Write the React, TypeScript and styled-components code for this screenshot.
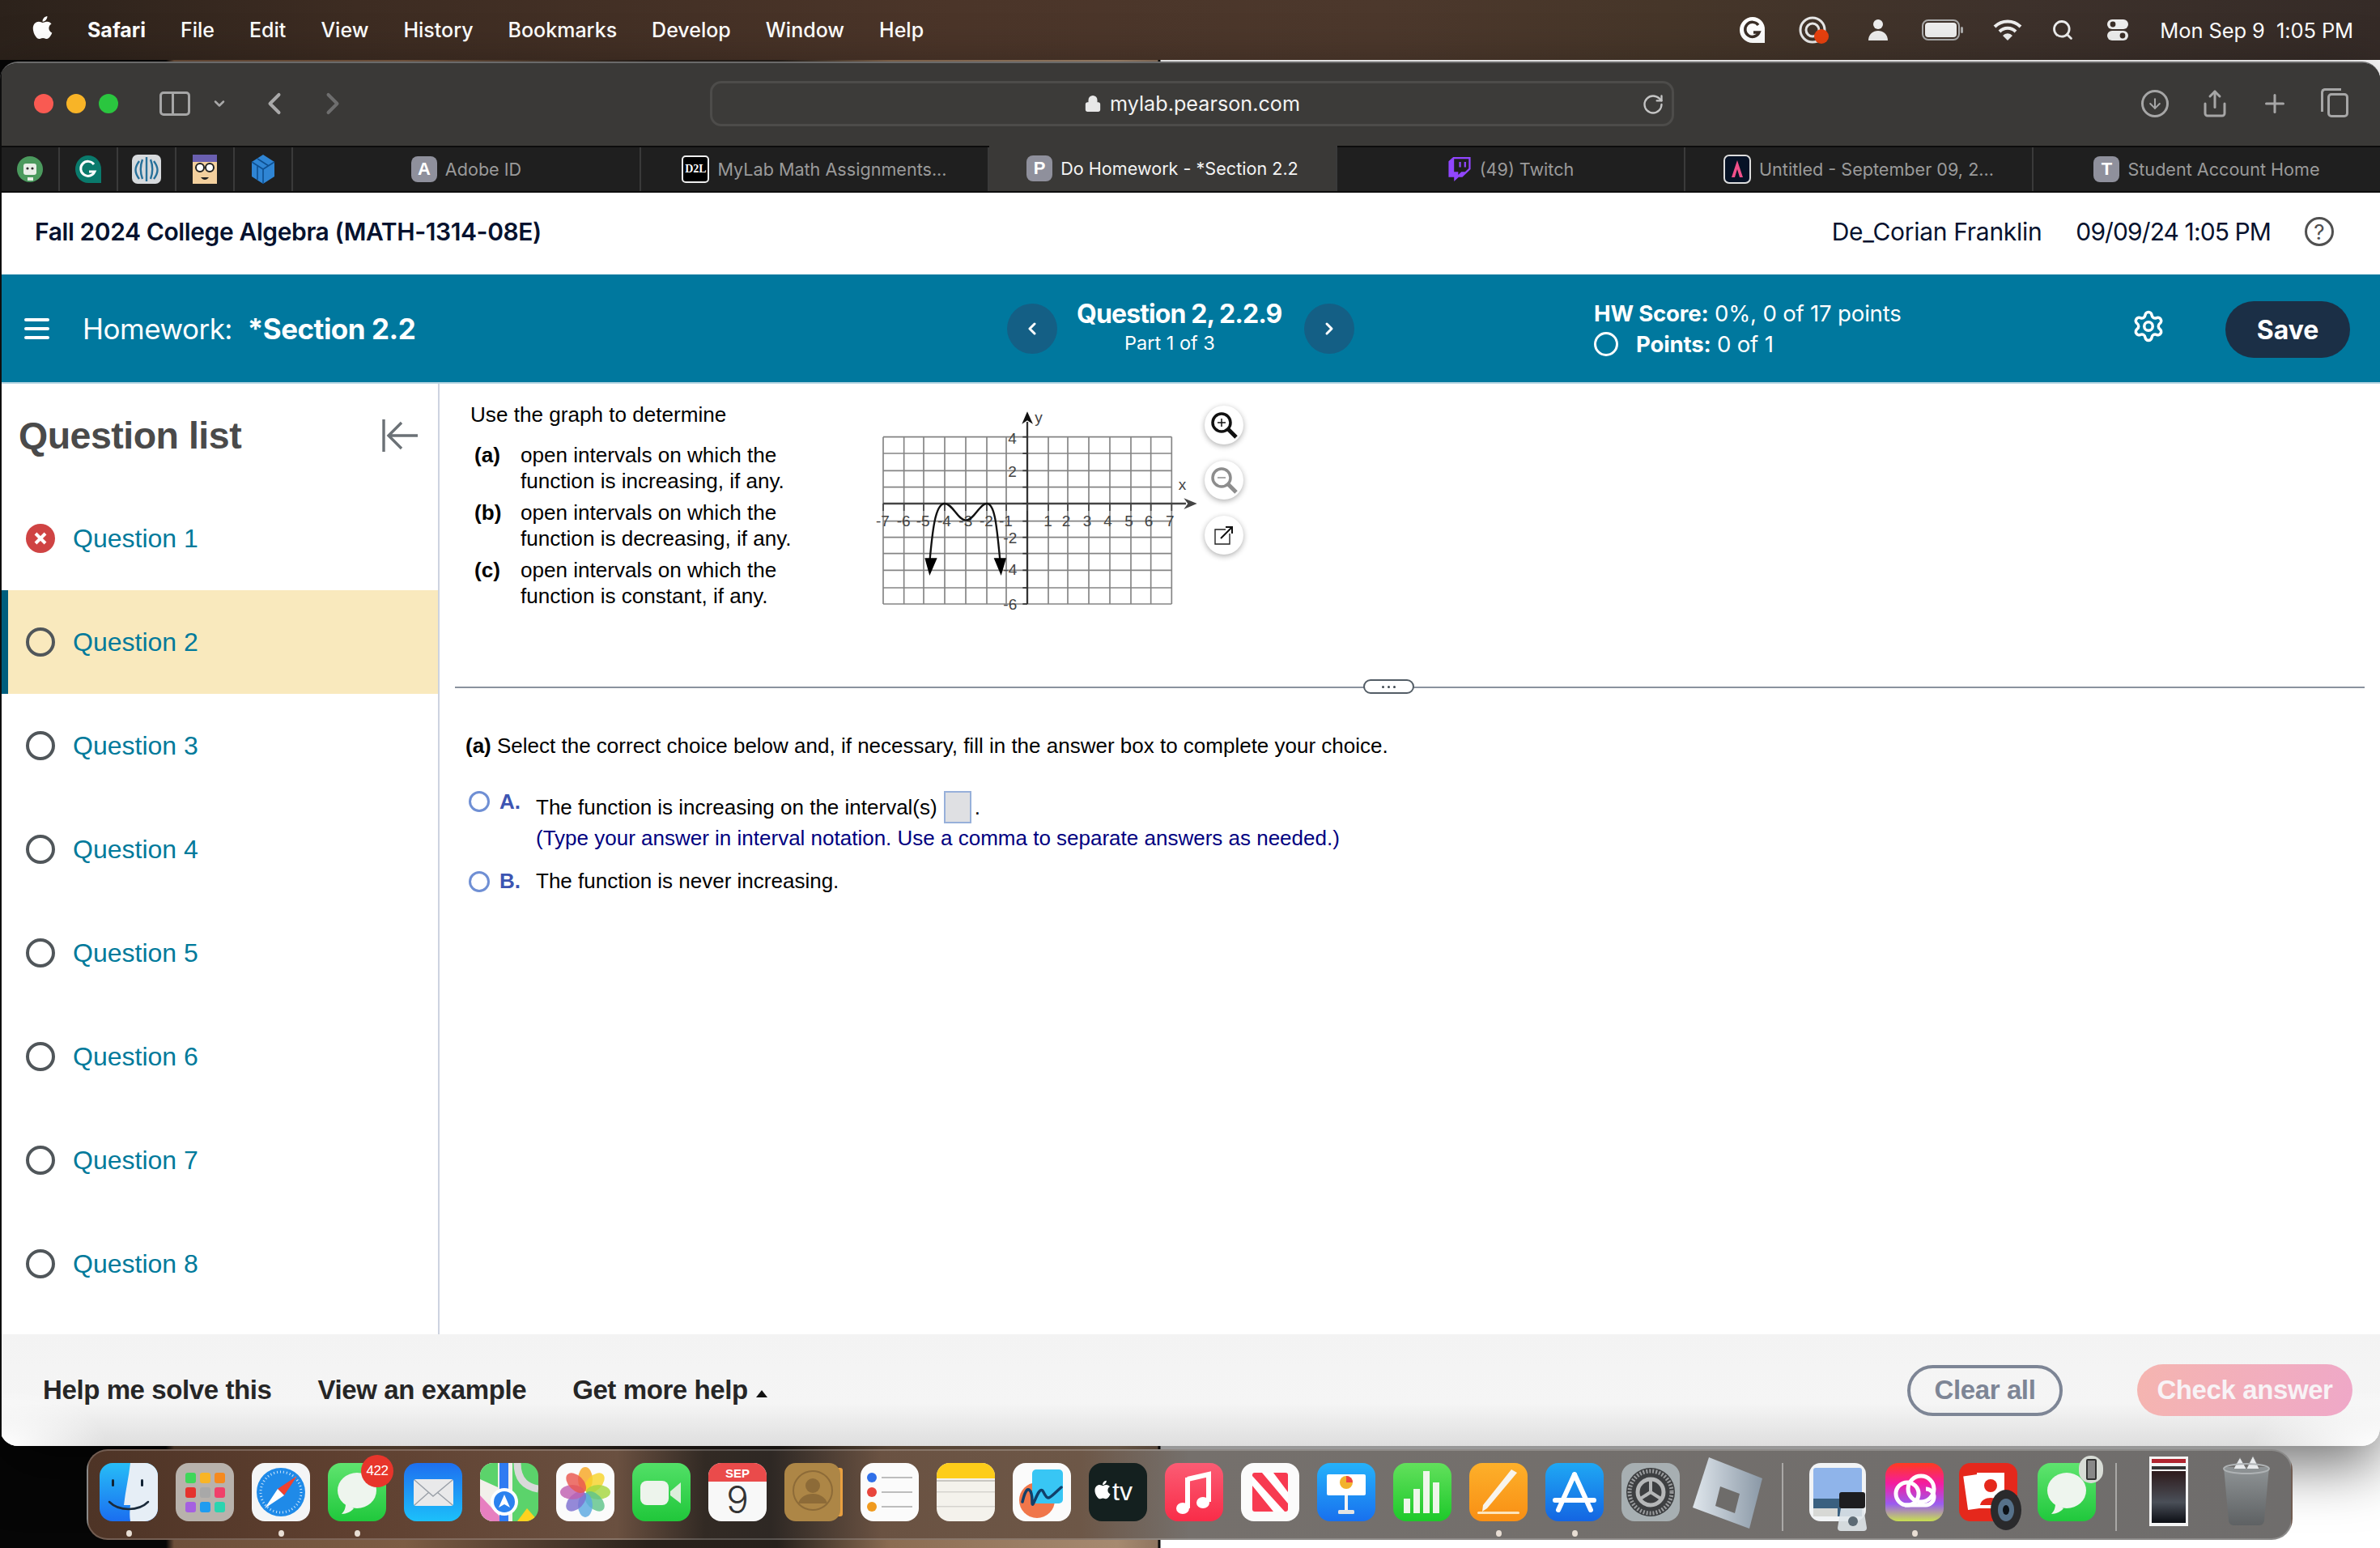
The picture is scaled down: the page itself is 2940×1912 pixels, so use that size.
import React from "react";
import styled, { createGlobalStyle } from "styled-components";
import { ChevronLeft, ChevronRight, Settings, Search, RotateCw, Plus, ChevronDown, Lock, ArrowDown, Share } from "lucide-react";
import { FaApple, FaTwitch } from "react-icons/fa";

const arial = '"Liberation Sans", Arial, sans-serif';
const inter = 'Inter, "Liberation Sans", sans-serif';

const Global = createGlobalStyle`
  html, body { margin: 0; padding: 0; background: #111; }
  * { box-sizing: border-box; }
`;

const Desktop = styled.div`
  width: 2940px; height: 1912px; overflow: hidden; display: flex; flex-direction: column;
  font-family: ${arial};
  background: linear-gradient(90deg, #060606 0 205px, #6d4f3a 215px, #7c5c44 500px, #2a211b 800px, #26201b 960px, #8b6c52 1100px, #a68a70 1380px, #8f7560 1430px, #0c0c0c 1431px 1433px, #ffffff 1434px);
`;
const MenuBar = styled.div`
  height: 74px; flex: none; display: flex; align-items: center; padding: 0 33px 0 40px; color: #fff;
  font: 500 25px ${inter};
  background: linear-gradient(90deg, #2c221b 0, #3d2c22 15%, #4b3529 40%, #4c382c 58%, #463629 70%, #3d312b 85%, #352b27 100%);
`;
const MenuLeft = styled.div`display: flex; align-items: center; gap: 43px; flex: 1;`;
const AppleSlot = styled.div`width: 25px; display: flex; margin-top: -6px;`;
const MenuStrong = styled.span`font-weight: 700;`;
const MenuItem = styled.span``;
const MenuRight = styled.div`display: flex; align-items: center;`;
const StatusSlot = styled.div<{ $w: number }>`width: ${p => p.$w}px; display: flex; justify-content: center; align-items: center;`;
const Clock = styled.span`margin-left: 13px; white-space: pre; font-weight: 400; font-size: 25.5px; letter-spacing: -.1px;`;

const Win = styled.div`
  margin-top: 2px; height: 1710px; flex: none; background: #0e0e0e; padding: 0 0 0 2px; display: flex; flex-direction: column;
  border-radius: 22px; overflow: hidden; box-shadow: 0 24px 70px rgba(0,0,0,.55); position: relative;
  border-top: 2px solid #6a6a6a;
`;
const Toolbar = styled.div`
  height: 102px; flex: none; background: #3a3937; position: relative; display: flex; align-items: center; padding: 0 37px 2px 40px; color: #a9a9a9;
`;
const Lights = styled.div`display: flex; gap: 16px; margin-right: 51px;`;
const Light = styled.span<{ $c: string }>`width: 24px; height: 24px; border-radius: 50%; background: ${p => p.$c};`;
const SidebarGlyph = styled.div`
  width: 38px; height: 30px; border: 3px solid #a6a6a6; border-radius: 5px; position: relative; margin-right: 16px;
  &::before { content: ""; position: absolute; left: 12px; top: 0; bottom: 0; width: 3px; background: #a6a6a6; }
`;
const NavGroup = styled.div`display: flex; align-items: center;`;
const NavGap = styled.div<{ $w: number }>`width: ${p => p.$w}px;`;
const UrlBar = styled.div`
  position: absolute; left: 875px; top: 22px; width: 1191px; height: 56px; border-radius: 14px; border: 3px solid #4d4c4a; background: #3c3b39;
  display: flex; align-items: center; justify-content: center; gap: 10px; color: #f2f2f2; font: 400 25.2px ${inter};
`;
const Reload = styled.div`position: absolute; right: 9px; top: 12px; display: flex; color: #c4c4c4;`;
const ToolRight = styled.div`margin-left: auto; display: flex; align-items: center; gap: 36px; color: #a6a6a6;`;
const ToolSlot = styled.div`width: 38px; display: flex; justify-content: center; align-items: center; position: relative;`;
const RoundDown = styled.div`width: 34px; height: 34px; border-radius: 50%; border: 3px solid #a6a6a6; display: flex; align-items: center; justify-content: center;`;
const TabsCopy = styled.div`
  width: 26px; height: 30px; position: relative; border: 3px solid #a6a6a6; border-radius: 5px; margin: 4px 0 0 8px;
  &::before { content: ""; position: absolute; left: -11px; top: -9px; width: 22px; height: 26px; border: 3px solid #a6a6a6; border-right: 0; border-bottom: 0; border-radius: 5px 0 0 0; }
`;

const Tabs = styled.div`
  height: 58px; flex: none; background: #1f1f1f; display: flex; border-top: 2px solid #0c0c0c; border-bottom: 2px solid #0c0c0c; color: #9a9a9a; font: 400 21.6px ${inter};
`;
const Pinned = styled.div`width: 72px; flex: none; border-right: 2px solid #3a3a3a; display: flex; align-items: center; justify-content: center;`;
const Tab = styled.div<{ $active?: boolean }>`
  width: 430px; flex: none; display: flex; align-items: center; justify-content: center; gap: 10px; white-space: nowrap; border-right: 2px solid #3a3a3a;
  background: ${p => (p.$active ? "#3a3937" : "transparent")}; color: ${p => (p.$active ? "#f4f4f4" : "#9a9a9a")};
  margin-top: ${p => (p.$active ? "-2px" : "0")};
`;
const TabLetter = styled.span`width: 32px; height: 32px; border-radius: 8px; background: #8f909c; color: #fff; display: flex; align-items: center; justify-content: center; font: 700 22px ${arial};`;
const D2L = styled.span`width: 34px; height: 34px; border-radius: 5px; background: #000; border: 2px solid #eee; color: #fff; display: flex; align-items: center; justify-content: center; font: 700 14px "Liberation Serif", serif;`;

const Page = styled.div`flex: 1; background: #fff; display: flex; flex-direction: column; min-height: 0;`;
const TopHead = styled.div`
  height: 101px; flex: none; display: flex; align-items: center; padding: 0 57px 5px 41px; color: #06122e; font: 400 30px ${inter};
`;
const Course = styled.div`font-weight: 600; flex: 1; letter-spacing: -.4px;`;
const Person = styled.span`margin-right: 42px; letter-spacing: -.3px;`;
const Stamp = styled.span`margin-right: 42px; letter-spacing: -.9px;`;
const HelpRing = styled.div`width: 36px; height: 36px; border-radius: 50%; border: 3px solid #505050; color: #505050; display: flex; align-items: center; justify-content: center; font: 400 26px ${inter};`;

const Band = styled.div`
  height: 135px; flex: none; background: #00789e; border-bottom: 2px solid #b6d5e2; color: #fff; display: flex; align-items: center; position: relative; padding-left: 28px; font-family: ${inter};
`;
const Burger = styled.div`width: 31px; display: flex; flex-direction: column; gap: 7px; margin-right: 41px; span { height: 4px; background: #fff; border-radius: 2px; }`;
const HwTitle = styled.div`font-size: 35px; width: 1142px; white-space: pre; letter-spacing: -.5px; b { font-weight: 700; }`;
const RoundNav = styled.div`width: 62px; height: 62px; border-radius: 50%; background: #145f85; display: flex; align-items: center; justify-content: center; flex: none;`;
const QBlock = styled.div`width: 255px; margin: -4px 26px 0 24px; display: flex; flex-direction: column; align-items: flex-start;`;
const QTitle = styled.div`font-weight: 700; font-size: 32px; line-height: 40px; white-space: nowrap; letter-spacing: -.9px;`;
const QPart = styled.div`font-size: 23.5px; line-height: 32px; margin-left: 59px; white-space: nowrap;`;
const Score = styled.div`margin-left: 296px; width: 600px; font-size: 27.6px; line-height: 38px; letter-spacing: -.2px; b { font-weight: 700; }`;
const ScoreRow = styled.div`display: flex; align-items: center; gap: 22px;`;
const ScoreRing = styled.span`width: 30px; height: 30px; border-radius: 50%; border: 3px solid #fff;`;
const SaveBtn = styled.div`
  position: absolute; right: 37px; top: 33px; width: 154px; height: 70px; border-radius: 35px; background: #1b2f46; color: #fff; font: 700 32px ${inter};
  display: flex; align-items: center; justify-content: center;
`;
const GearSlot = styled.div`position: absolute; left: 2631px; top: 43px; display: flex;`;

const Main = styled.div`flex: 1; display: flex; min-height: 0;`;
const Side = styled.div`width: 541px; flex: none; border-right: 2px solid #cdd3e0; display: flex; flex-direction: column;`;
const SideHead = styled.div`height: 127px; flex: none; display: flex; align-items: center; justify-content: space-between; padding: 0 23px 0 21px;`;
const SideTitle = styled.div`font: 700 46.5px ${arial}; color: #4a4a4a; letter-spacing: -.5px;`;
const Row = styled.div<{ $active?: boolean }>`
  height: 128px; flex: none; display: flex; align-items: center; gap: 22px; padding-left: ${p => (p.$active ? "22px" : "30px")};
  background: ${p => (p.$active ? "#f9e9bd" : "transparent")}; border-left: ${p => (p.$active ? "8px solid #005e7d" : "0")};
  color: #007a9b; font: 400 32px ${arial};
`;
const RowRing = styled.span`width: 36px; height: 36px; border-radius: 50%; border: 4px solid #50565a; flex: none;`;
const RowBad = styled.span`width: 36px; height: 36px; border-radius: 50%; background: #cf4343; flex: none; display: flex; align-items: center; justify-content: center;`;

const Content = styled.div`flex: 1; display: flex; flex-direction: column; min-width: 0; color: #000; font: 400 26px ${arial};`;
const QArea = styled.div`height: 374px; flex: none; display: flex; padding: 17px 0 0 38px;`;
const Prompt = styled.div`width: 479px; flex: none; padding-top: 5px; line-height: 32px; font-size: 26.1px;`;
const PromptPart = styled.div`display: flex; margin-top: 7px; b { width: 62px; flex: none; padding-left: 5px; }`;
const FirstPart = styled(PromptPart)`margin-top: 18px;`;
const Tools = styled.div`display: flex; flex-direction: column; gap: 20px; margin: 10px 0 0 8px;`;
const ToolBtn = styled.div`width: 48px; height: 48px; border-radius: 50%; background: #fff; box-shadow: 0 2px 7px rgba(0,0,0,.32); display: flex; align-items: center; justify-content: center;`;
const Divider = styled.div`height: 2px; flex: none; margin: 0 19px 0 19px; background: #8a929e; position: relative;`;
const Handle = styled.div`
  position: absolute; left: 1122px; top: -9px; width: 63px; height: 18px; background: #fff; border: 2px solid #535d66; border-radius: 9px;
  display: flex; align-items: center; justify-content: center; gap: 4px; span { width: 3px; height: 3px; background: #3f4850; border-radius: 50%; }
`;
const Answer = styled.div`padding: 53px 0 0 32px;`;
const Lead = styled.div`line-height: 36px; b { font-weight: 700; }`;
const Choice = styled.div`display: flex; padding-left: 4px;`;
const ChoiceA = styled(Choice)`margin-top: 36px;`;
const ChoiceB = styled(Choice)`margin-top: 17px; align-items: center;`;
const Radio = styled.span`width: 26px; height: 26px; border-radius: 50%; border: 3px solid #6f8fd4; flex: none; margin-right: 12px; margin-top: 2px;`;
const Letter = styled.b`width: 45px; flex: none; color: #3d55b2; font-size: 26px; line-height: 30px;`;
const ChoiceText = styled.div`line-height: 36px;`;
const FirstLine = styled.div`display: flex; align-items: center; height: 40px; margin-top: 2px;`;
const Blank = styled.span`width: 34px; height: 40px; background: #dfe0e3; border: 2px solid #97b0da; margin: 0 4px 0 8px;`;
const Hint = styled.div`color: #000080;`;

const Foot = styled.div`
  height: 138px; flex: none; display: flex; align-items: center; padding: 0 34px 0 51px; color: #262626; font: 700 33px ${arial}; letter-spacing: -.4px;
  background: radial-gradient(ellipse 130px 70px at 0 100%, #fff, transparent), radial-gradient(ellipse 160px 70px at 100% 100%, #fff, transparent), linear-gradient(#f3f3f3, #f5f5f5 62%, #dedede);
`;
const FootLink = styled.span`margin-right: 57px;`;
const Caret = styled.span`display: inline-block; width: 0; height: 0; border: 7.5px solid transparent; border-top: 0; border-bottom: 9px solid #111; margin-left: 10px; vertical-align: 2px;`;
const Clear = styled.div`
  margin-left: auto; width: 192px; height: 63px; border-radius: 32px; border: 4px solid #7d8595; color: #7d8595; display: flex; align-items: center; justify-content: center; margin-right: 92px;
`;
const Check = styled.div`
  width: 266px; height: 64px; border-radius: 32px; color: #f8f3f6; display: flex; align-items: center; justify-content: center;
  background: linear-gradient(100deg, #f5b5b0, #efa8c8);
`;

const Dock = styled.div`
  margin: 4px 0 0 107px; width: 2725px; height: 112px; flex: none; border-radius: 26px; border: 2px solid rgba(255,255,255,.2); display: flex; padding: 15px 0 0 14px; position: relative;
  background: linear-gradient(90deg, #4e3426 0, #5f4030 12%, #6a5040 24%, #322a24 28%, #2e2824 31%, #6a5242 36%, #6d5747 45%, #75706c 50%, #6f6d6c 100%);
`;
const DockSlot = styled.div<{ $w?: number; $ml?: number }>`
  width: ${p => p.$w ?? 72}px; margin-left: ${p => p.$ml ?? 22}px; flex: none; display: flex; flex-direction: column; align-items: center; position: relative;
`;
const FirstSlot = styled(DockSlot)`margin-left: 0;`;
const Glyph = styled.div<{ $top?: number }>`height: 72px; display: flex; justify-content: center; margin-top: ${p => p.$top ?? 0}px; svg { flex: none; }`;
const Dot = styled.span<{ $on?: boolean }>`width: 7px; height: 8px; border-radius: 50%; margin-top: 11px; background: ${p => (p.$on ? "#e8ded4" : "transparent")};`;
const Badge = styled.span`position: absolute; top: -10px; right: -9px; width: 40px; height: 40px; border-radius: 50%; background: #e8352b; color: #fff; font: 400 17px ${arial}; display: flex; align-items: center; justify-content: center; letter-spacing: -.5px;`;
const PhoneBadge = styled.span`
  position: absolute; top: -9px; right: -9px; width: 30px; height: 34px; border-radius: 15px; background: #d8dcd6; display: flex; align-items: center; justify-content: center;
  &::before { content: ""; width: 9px; height: 22px; border: 2px solid #333; background: #888; border-radius: 2px; }
`;
const DockRule = styled.div`width: 2px; height: 84px; background: rgba(255,255,255,.4); margin: 0 0 0 24px; flex: none;`;

const Tile = ({ children, w = 72, h = 72 }: { children: React.ReactNode; w?: number; h?: number }) => (
  <svg width={w} height={h} viewBox={`0 0 ${w} ${h}`}>{children}</svg>
);
const Grad = ({ id, a, b, x = false }: { id: string; a: string; b: string; x?: boolean }) => (
  <defs><linearGradient id={id} x1="0" y1="0" x2={x ? 1 : 0} y2={x ? 0 : 1}><stop offset="0" stopColor={a} /><stop offset="1" stopColor={b} /></linearGradient></defs>
);

const Finder = () => (
  <Tile>
    <Grad id="fa" a="#27bdf7" b="#1a6ef0" />
    <rect width="72" height="72" rx="16" fill="url(#fa)" />
    <path d="M38 0h18a16 16 0 0 1 16 16v40a16 16 0 0 1-16 16H38c-1-6-1-12 0-20h-8c2-18 6-34 8-52z" fill="#e6eef6" />
    <rect x="15" y="20" width="3" height="9" rx="1.5" fill="#123" /><rect x="51" y="20" width="3" height="9" rx="1.5" fill="#123" />
    <path d="M12 48c12 12 36 12 48 0" fill="none" stroke="#1a2a3a" strokeWidth="2.5" strokeLinecap="round" />
  </Tile>
);
const Launchpad = () => {
  const c = ["#3fd75a", "#f9b526", "#f58a1f", "#e5322d", "#a8a8a8", "#f0406a", "#a560e0", "#1f9cf0", "#2bd4b0"];
  return (
    <Tile>
      <rect width="72" height="72" rx="16" fill="#b8b2ac" />
      {c.map((f, i) => <rect key={f} x={12 + (i % 3) * 18} y={12 + Math.floor(i / 3) * 18} width="13" height="13" rx="3" fill={f} />)}
    </Tile>
  );
};
const Safari = () => (
  <Tile>
    <rect width="72" height="72" rx="16" fill="#f4f5f6" />
    <circle cx="36" cy="36" r="30" fill="#1f8ae8" /><circle cx="36" cy="36" r="25" fill="none" stroke="#cfe6fa" strokeWidth="3" strokeDasharray="1 3" />
    <path d="M56 16L40 40 32 32z" fill="#f0412f" /><path d="M16 56L32 32l8 8z" fill="#fff" />
  </Tile>
);
const Messages = ({ id }: { id: string }) => (
  <Tile>
    <Grad id={id} a="#5fe46f" b="#20c83c" />
    <rect width="72" height="72" rx="16" fill={`url(#${id})`} />
    <ellipse cx="36" cy="34" rx="24" ry="22" fill="#eef5ee" /><path d="M22 50c0 6-2 10-5 13 6 0 12-3 15-7z" fill="#eef5ee" />
  </Tile>
);
const Mail = () => (
  <Tile>
    <Grad id="ma" a="#1e6ff0" b="#1cc0fa" />
    <rect width="72" height="72" rx="16" fill="url(#ma)" />
    <rect x="12" y="20" width="49" height="33" rx="3" fill="#e9e9ea" /><path d="M13 21l23 20 24-20M13 52l18-16M60 52L41 36" fill="none" stroke="#9aa0a8" strokeWidth="1.4" />
  </Tile>
);
const Maps = () => (
  <Tile>
    <defs><clipPath id="mpc"><rect width="72" height="72" rx="16" /></clipPath></defs>
    <g clipPath="url(#mpc)">
      <rect width="72" height="72" fill="#5bd36b" /><path d="M0 0h40v72H0z" fill="#f2f0ea" /><path d="M0 0h22v30L0 20z" fill="#5bd36b" /><path d="M0 40l30 32H0z" fill="#e77fc0" /><path d="M46 72l12-16 14 16z" fill="#ffd21f" />
      <rect x="24" y="0" width="11" height="72" fill="#2f7bf2" /><path d="M46 0c0 24 14 30 26 32" fill="none" stroke="#d9d9d9" strokeWidth="9" />
      <circle cx="30" cy="48" r="17" fill="#fff" /><circle cx="30" cy="48" r="13" fill="#2b82ef" /><path d="M30 39l7 16-7-4-7 4z" fill="#fff" />
    </g>
  </Tile>
);
const Photos = () => {
  const c = ["#f6a623", "#f7d32a", "#a5d63f", "#5fc38a", "#5ba8e0", "#7d6fd0", "#c05fb0", "#e9574e"];
  return (
    <Tile>
      <rect width="72" height="72" rx="16" fill="#fbfbfb" />
      {c.map((f, i) => <ellipse key={f} cx="36" cy="20" rx="9" ry="15" fill={f} opacity=".82" transform={`rotate(${i * 45} 36 36)`} />)}
    </Tile>
  );
};
const Facetime = () => (
  <Tile>
    <Grad id="ft" a="#52e067" b="#20c73a" />
    <rect width="72" height="72" rx="16" fill="url(#ft)" />
    <rect x="10" y="22" width="35" height="30" rx="8" fill="#edf4ec" /><path d="M47 35l13-11v26L47 40z" fill="#dbeedb" />
  </Tile>
);
const IconText = styled.text`font-family: ${arial};`;
const ThinText = styled.text`font-family: ${inter}; font-weight: 300;`;
const Calendar = () => (
  <Tile>
    <defs><clipPath id="cal"><rect width="72" height="72" rx="16" /></clipPath></defs>
    <g clipPath="url(#cal)"><rect width="72" height="72" fill="#f8f8f8" /><rect width="72" height="23" fill="#ea4b4b" /></g>
    <IconText x="36" y="18" fontSize="15" fontWeight="700" fill="#fff" textAnchor="middle">SEP</IconText>
    <ThinText x="36" y="62" fontSize="46" fill="#333" textAnchor="middle">9</ThinText>
  </Tile>
);
const Contacts = () => (
  <Tile>
    <rect x="60" y="6" width="12" height="60" rx="3" fill="#e9a040" />
    <rect width="69" height="72" rx="14" fill="#ad8646" />
    <circle cx="35" cy="34" r="24" fill="none" stroke="#8d6b38" strokeWidth="2" />
    <circle cx="35" cy="28" r="9" fill="#8d6b38" /><path d="M17 50c4-16 32-16 36 0" fill="#8d6b38" />
  </Tile>
);
const Reminders = () => (
  <Tile>
    <rect width="72" height="72" rx="16" fill="#fbfbfb" />
    {[["#2f6fe8", 18], ["#e8453c", 36], ["#f09a1e", 54]].map(([f, y]) => (
      <g key={String(y)}><circle cx="14" cy={y as number} r="6" fill={f as string} /><rect x="26" y={(y as number) - 1} width="38" height="2" fill="#bdbdbd" /></g>
    ))}
  </Tile>
);
const Notes = () => (
  <Tile>
    <defs><clipPath id="nt"><rect width="72" height="72" rx="16" /></clipPath></defs>
    <g clipPath="url(#nt)"><rect width="72" height="72" fill="#f4f2ec" /><rect width="72" height="19" fill="#fdcd1a" />
      <rect y="21" width="72" height="2" fill="#c9c7c2" /><rect y="35" width="72" height="1.5" fill="#d5d3ce" /><rect y="53" width="72" height="1.5" fill="#d5d3ce" /></g>
  </Tile>
);
const Freeform = () => (
  <Tile>
    <rect width="72" height="72" rx="16" fill="#fbfbfb" />
    <circle cx="30" cy="46" r="22" fill="#f0764a" /><rect x="24" y="8" width="38" height="42" rx="5" fill="#38c6f4" />
    <path d="M12 48c6-26 12-14 12 0s8-24 14-12 6 8 22-6" fill="none" stroke="#11406a" strokeWidth="3.5" strokeLinecap="round" />
  </Tile>
);
const TvApp = () => (
  <Tile>
    <rect width="72" height="72" rx="16" fill="#14201f" />
    <foreignObject x="4" y="20" width="26" height="30"><FaApple size={26} color="#fff" /></foreignObject>
    <IconText x="29" y="46" fontSize="32" fill="#fff">tv</IconText>
  </Tile>
);
const Music = () => (
  <Tile>
    <Grad id="mu" a="#fb5c74" b="#f92c48" />
    <rect width="72" height="72" rx="16" fill="url(#mu)" />
    <path d="M28 20l26-6v34" fill="none" stroke="#fff" strokeWidth="6" /><path d="M28 18v38" stroke="#fff" strokeWidth="6" />
    <ellipse cx="22" cy="56" rx="8" ry="7" fill="#fff" /><ellipse cx="47" cy="49" rx="8" ry="7" fill="#fff" />
  </Tile>
);
const News = () => (
  <Tile>
    <rect width="72" height="72" rx="16" fill="#fbfbfb" />
    <rect x="14" y="12" width="44" height="48" rx="3" fill="#f73a50" /><path d="M14 16l40 44h-14L14 28z" fill="#fff" />
    <path d="M26 12h14l18 24v14z" fill="#fff" />
  </Tile>
);
const Keynote = () => (
  <Tile>
    <Grad id="kn" a="#25b2fb" b="#1870ee" />
    <rect width="72" height="72" rx="16" fill="url(#kn)" />
    <rect x="12" y="14" width="48" height="26" rx="2" fill="#fff" /><circle cx="36" cy="24" r="8" fill="#f2b22c" /><path d="M36 16a8 8 0 0 1 8 8h-8z" fill="#e44" />
    <rect x="34" y="40" width="4" height="20" fill="#f4f4f4" /><rect x="26" y="58" width="20" height="5" rx="1.5" fill="#e3e3e3" />
  </Tile>
);
const Numbers = () => (
  <Tile>
    <Grad id="nu" a="#62e05c" b="#1dc92a" />
    <rect width="72" height="72" rx="16" fill="url(#nu)" />
    <rect x="13" y="44" width="8" height="18" fill="#eef6ea" /><rect x="25" y="32" width="8" height="30" fill="#eef6ea" /><rect x="37" y="10" width="8" height="52" fill="#eef6ea" /><rect x="49" y="24" width="8" height="38" fill="#eef6ea" />
  </Tile>
);
const Pages = () => (
  <Tile>
    <Grad id="pg" a="#fdb02a" b="#f98f14" />
    <rect width="72" height="72" rx="16" fill="url(#pg)" />
    <path d="M52 8l7 4-37 44-6 4 1-8z" fill="#f8f4ec" /><rect x="10" y="60" width="52" height="3" rx="1.5" fill="#fde5bb" />
  </Tile>
);
const AppStore = () => (
  <Tile>
    <Grad id="as" a="#1fa8f4" b="#1465e2" />
    <rect width="72" height="72" rx="16" fill="url(#as)" />
    <path d="M36 14L16 58M36 14l20 44M12 46h48" stroke="#fff" strokeWidth="6" strokeLinecap="round" fill="none" />
  </Tile>
);
const SystemPrefs = () => (
  <Tile>
    <rect width="72" height="72" rx="16" fill="#a7afb2" />
    <circle cx="36" cy="36" r="30" fill="#3d3f41" /><circle cx="36" cy="36" r="26" fill="none" stroke="#9a9c9e" strokeWidth="5" strokeDasharray="2 2" />
    <circle cx="36" cy="36" r="16" fill="none" stroke="#b5b7b8" strokeWidth="5" />
    <path d="M36 36V20M36 36L22 45M36 36l14 9" stroke="#b5b7b8" strokeWidth="4" />
  </Tile>
);
const Roblox = () => (
  <Tile w={86} h={88}>
    <Grad id="rb" a="#dfe6ec" b="#8a98a6" x />
    <path d="M20 0l66 26-16 62L0 62z" fill="url(#rb)" /><path d="M34 36l24 9-6 24-24-9z" fill="#6e6c6a" />
  </Tile>
);
const Preview = () => (
  <Tile h={84} w={74}>
    <rect x="1" width="70" height="72" rx="14" fill="#f1f3f5" /><rect x="6" y="6" width="60" height="60" rx="3" fill="#8fb4ea" /><path d="M6 44h60v22H6z" fill="#3a6080" /><path d="M6 56h30v10H6z" fill="#d7d8d5" />
    <rect x="38" y="36" width="32" height="20" rx="3" fill="#1d1d1f" /><path d="M40 56h28l4 24a4 4 0 0 1-4 4H40a4 4 0 0 1-4-4z" fill="#dfe6ea" opacity=".9" /><circle cx="55" cy="72" r="6" fill="#5c6a74" />
  </Tile>
);
const CreativeCloud = () => (
  <Tile>
    <defs><linearGradient id="ccg" x1="0" y1="0" x2="0" y2="1"><stop offset="0" stopColor="#ff3b1f" /><stop offset=".35" stopColor="#f41ca0" /><stop offset=".7" stopColor="#9a5cf0" /><stop offset="1" stopColor="#c8e050" /></linearGradient></defs>
    <rect width="72" height="72" rx="16" fill="url(#ccg)" />
    <circle cx="27" cy="38" r="14" fill="none" stroke="#fff" strokeWidth="5" /><circle cx="44" cy="32" r="16" fill="none" stroke="#fff" strokeWidth="5" /><path d="M24 52h26a10 10 0 0 0 0-20" fill="none" stroke="#fff" strokeWidth="5" />
  </Tile>
);
const PhotoBooth = () => (
  <Tile h={84} w={78}>
    <rect width="72" height="72" rx="14" fill="#e5281c" /><rect x="8" y="14" width="32" height="42" fill="#fff" transform="rotate(-8 24 35)" /><rect x="22" y="12" width="34" height="44" fill="#fff" /><circle cx="39" cy="28" r="8" fill="#e5281c" /><path d="M26 52c2-12 24-12 26 0z" fill="#e5281c" />
    <ellipse cx="58" cy="58" rx="19" ry="25" fill="#2a2a2c" /><ellipse cx="58" cy="58" rx="10" ry="14" fill="#56718a" /><ellipse cx="58" cy="58" rx="4" ry="6" fill="#0c1116" />
  </Tile>
);
const DocThumb = () => (
  <Tile w={48} h={86}>
    <rect width="48" height="86" fill="#f4f4f4" /><rect x="3" y="3" width="42" height="5" fill="#b0252f" /><rect x="3" y="12" width="42" height="4" fill="#333" />
    <defs><linearGradient id="dth" x1="0" y1="0" x2="0" y2="1"><stop offset="0" stopColor="#2e1b1c" /><stop offset=".6" stopColor="#4a4f58" /><stop offset="1" stopColor="#0c0e14" /></linearGradient></defs>
    <rect x="3" y="18" width="42" height="64" fill="url(#dth)" />
  </Tile>
);
const Trash = () => (
  <Tile w={60} h={86}>
    <Grad id="tr" a="#8f9496" b="#5e6163" />
    <path d="M2 14h56l-6 66a6 6 0 0 1-6 6H14a6 6 0 0 1-6-6z" fill="url(#tr)" />
    <path d="M14 16l8-14 8 14 8-16 8 16" fill="#e8eaec" stroke="#777" />
    <ellipse cx="30" cy="16" rx="28" ry="6" fill="none" stroke="#aeb2b4" strokeWidth="2" />
  </Tile>
);

const first = [
  { k: "f", c: <Finder />, dot: true }, { k: "l", c: <Launchpad /> }, { k: "s", c: <Safari />, dot: true },
  { k: "m", c: <Messages id="m1" />, dot: true, badge: "422" }, { k: "ma", c: <Mail /> }, { k: "mp", c: <Maps /> }, { k: "p", c: <Photos /> },
  { k: "ft", c: <Facetime /> }, { k: "ca", c: <Calendar /> }, { k: "co", c: <Contacts /> }, { k: "re", c: <Reminders /> }, { k: "no", c: <Notes /> },
  { k: "fr", c: <Freeform /> }, { k: "tv", c: <TvApp /> }, { k: "mu", c: <Music /> }, { k: "ne", c: <News /> }, { k: "ke", c: <Keynote /> },
  { k: "nu", c: <Numbers /> }, { k: "pa", c: <Pages />, dot: true }, { k: "as", c: <AppStore />, dot: true }, { k: "sy", c: <SystemPrefs /> },
];

const questions = [1, 2, 3, 4, 5, 6, 7, 8];
const gridX = [93, 170, 243, 321, 399, 477, 549, 627, 705, 777, 855, 933, 1011, 1085, 1162];
const gridY = [146, 207, 271, 332, 393, 458, 518, 578, 640, 705, 765];
const xLabels: [string, number][] = [["-7", 66], ["-6", 143], ["-5", 215], ["-4", 294], ["-3", 373], ["-2", 450], ["-1", 522], ["1", 688], ["2", 755], ["3", 833], ["4", 910], ["5", 988], ["6", 1061], ["7", 1140]];
const yLabels: [string, number, number][] = [["4", 556, 170], ["2", 556, 294], ["-2", 538, 540], ["-4", 538, 657], ["-6", 538, 786]];

const GraphText = styled.text`font-family: ${arial}; font-size: 57px; fill: #444;`;
const Graph = () => (
  <svg width="420" height="280" viewBox="0 0 1260 840" style={{ flex: "none" }}>
    {gridX.map(x => <line key={x} x1={x} x2={x} y1={146} y2={765} stroke="#848484" strokeWidth="5" />)}
    {gridY.map(y => <line key={y} x1={93} x2={1162} y1={y} y2={y} stroke="#848484" strokeWidth="5" />)}
    {xLabels.map(([t, x]) => <GraphText key={t + x} x={x} y={478}>{t}</GraphText>)}
    {yLabels.map(([t, x, y]) => <GraphText key={t} x={x} y={y}>{t}</GraphText>)}
    <GraphText x={655} y={92}>y</GraphText>
    <GraphText x={1187} y={342}>x</GraphText>
    <line x1="93" x2="1215" y1="393" y2="393" stroke="#444" strokeWidth="7" />
    <line x1="627" x2="627" y1="90" y2="765" stroke="#333" strokeWidth="7" />
    <path d="M1256 393l-49-20 15 20-15 21z" fill="#444" />
    <path d="M627 52l-20 46 20-13 21 13z" fill="#111" />
    {gridY.map(y => <line key={y} x1={610} x2={627} y1={y} y2={y} stroke="#333" strokeWidth="5" />)}
    {gridX.map(x => <line key={x} x1={x} x2={x} y1={393} y2={420} stroke="#444" strokeWidth="5" />)}
    <path d="M265 610C275 500 285 393 321 393 350 393 370 455 399 455 430 455 450 393 477 393 510 393 515 500 527 610" fill="none" stroke="#111" strokeWidth="7" />
    <path d="M247 595h46l-28 65zM503 595h46l-19 65z" fill="#000" />
  </svg>
);

const Zoomer = ({ plus, c }: { plus: boolean; c: string }) => (
  <svg width="34" height="34" viewBox="0 0 34 34">
    <circle cx="14" cy="14" r="11" fill="none" stroke={c} strokeWidth="3.5" />
    <path d="M22 22l10 10" stroke={c} strokeWidth="5" />
    <path d="M9 14h10" stroke={c} strokeWidth="1.5" />
    {plus && <path d="M14 9v10" stroke={c} strokeWidth="1.5" />}
  </svg>
);

export default function App() {
  return (
    <Desktop>
      <Global />
      <MenuBar>
        <MenuLeft>
          <AppleSlot><FaApple size={32} color="#fff" /></AppleSlot>
          <MenuStrong>Safari</MenuStrong>
          {["File", "Edit", "View", "History", "Bookmarks", "Develop", "Window", "Help"].map(m => <MenuItem key={m}>{m}</MenuItem>)}
        </MenuLeft>
        <MenuRight>
          <StatusSlot $w={72}>
            <svg width="34" height="34" viewBox="0 0 34 34"><path d="M17 1a16 16 0 1 0 0 32h15V17A15 15 0 0 0 17 1z" fill="#fff" /><path d="M24 11a9 9 0 1 0 1 9h-7" fill="none" stroke="#3a2e27" strokeWidth="3.5" /></svg>
          </StatusSlot>
          <StatusSlot $w={80}>
            <svg width="40" height="36" viewBox="0 0 40 36"><circle cx="18" cy="18" r="15" fill="none" stroke="#e8e8e8" strokeWidth="3" /><circle cx="18" cy="18" r="8" fill="none" stroke="#e8e8e8" strokeWidth="3" /><circle cx="29" cy="26" r="9" fill="#e8410e" /></svg>
          </StatusSlot>
          <StatusSlot $w={78}>
            <svg width="26" height="28" viewBox="0 0 26 28"><circle cx="13" cy="7" r="6" fill="#eee" /><path d="M1 27c0-16 24-16 24 0z" fill="#eee" /></svg>
          </StatusSlot>
          <StatusSlot $w={82}>
            <svg width="52" height="26" viewBox="0 0 52 26"><rect x="1" y="1" width="45" height="24" rx="7" fill="none" stroke="#aaa" strokeWidth="2" /><rect x="4" y="4" width="39" height="18" rx="4" fill="#eee" /><rect x="48" y="9" width="3" height="8" rx="1.5" fill="#aaa" /></svg>
          </StatusSlot>
          <StatusSlot $w={78}>
            <svg width="36" height="28" viewBox="0 0 36 28"><path d="M2 10a23 23 0 0 1 32 0" fill="none" stroke="#eee" strokeWidth="4" /><path d="M8 16a14 14 0 0 1 20 0" fill="none" stroke="#eee" strokeWidth="4" /><path d="M18 27l-6-6a8 8 0 0 1 12 0z" fill="#eee" /></svg>
          </StatusSlot>
          <StatusSlot $w={58}><Search size={28} color="#eee" strokeWidth={2.4} /></StatusSlot>
          <StatusSlot $w={78}>
            <svg width="30" height="28" viewBox="0 0 30 28"><rect x="2" y="1" width="26" height="12" rx="6" fill="#eee" /><circle cx="9" cy="7" r="3.4" fill="#3a2e27" /><rect x="2" y="15" width="26" height="12" rx="6" fill="#eee" /><circle cx="21" cy="21" r="3.4" fill="#3a2e27" /></svg>
          </StatusSlot>
          <Clock>Mon Sep 9  1:05 PM</Clock>
        </MenuRight>
      </MenuBar>

      <Win>
        <Toolbar>
          <Lights><Light $c="#f95a52" /><Light $c="#f8b427" /><Light $c="#2ac63f" /></Lights>
          <NavGroup>
            <SidebarGlyph />
            <NavGap $w={10} />
            <ChevronDown size={20} strokeWidth={3} />
            <NavGap $w={36} />
            <ChevronLeft size={44} strokeWidth={2.2} />
            <NavGap $w={28} />
            <ChevronRight size={44} strokeWidth={2.2} color="#6e6e6e" />
          </NavGroup>
          <UrlBar>
            <Lock size={22} fill="#e8e8e8" color="#e8e8e8" />mylab.pearson.com
            <Reload><RotateCw size={28} strokeWidth={2} /></Reload>
          </UrlBar>
          <ToolRight>
            <ToolSlot><RoundDown><ArrowDown size={20} strokeWidth={2.4} /></RoundDown></ToolSlot>
            <ToolSlot><Share size={36} strokeWidth={2} /></ToolSlot>
            <ToolSlot><Plus size={36} strokeWidth={2} /></ToolSlot>
            <ToolSlot><TabsCopy /></ToolSlot>
          </ToolRight>
        </Toolbar>
        <Tabs>
          <Pinned>
            <svg width="32" height="36" viewBox="0 0 32 36"><circle cx="16" cy="18" r="16" fill="#4b9a5e" /><rect x="8" y="11" width="16" height="14" rx="3" fill="#e8efe8" /><circle cx="13" cy="17" r="1.6" fill="#333" /><circle cx="19" cy="17" r="1.6" fill="#333" /><rect x="13" y="28" width="7" height="4" fill="#e8efe8" /></svg>
          </Pinned>
          <Pinned>
            <svg width="34" height="36" viewBox="0 0 34 36"><path d="M17 1a16 17 0 1 0 0 34h16V18A16 17 0 0 0 17 1z" fill="#0a7a6c" /><path d="M24 12a9 9 0 1 0 1 9h-7" fill="none" stroke="#fff" strokeWidth="3" /></svg>
          </Pinned>
          <Pinned>
            <svg width="36" height="36" viewBox="0 0 36 36"><rect width="36" height="36" rx="7" fill="#d7dadd" /><path d="M18 3v30M9 8c-6 8-6 14 0 22M27 8c6 8 6 14 0 22M13 6c-3 8-3 16 0 24M23 6c3 8 3 16 0 24" fill="none" stroke="#26709a" strokeWidth="2.4" /></svg>
          </Pinned>
          <Pinned>
            <svg width="30" height="36" viewBox="0 0 30 36"><rect width="30" height="36" fill="#f3d09e" /><rect width="30" height="9" fill="#6a5fb0" /><circle cx="9" cy="16" r="5" fill="#fff" stroke="#222" strokeWidth="2" /><circle cx="21" cy="16" r="5" fill="#fff" stroke="#222" strokeWidth="2" /><path d="M10 28c3 4 7 4 10 0z" fill="#222" /></svg>
          </Pinned>
          <Pinned>
            <svg width="30" height="36" viewBox="0 0 30 36"><path d="M15 0l14 9v18l-14 9-14-9V9z" fill="#2f85d4" /><path d="M1 9l14 9 14-9M15 18v18M8 5l14 9M8 31V14" fill="none" stroke="#0e4f90" strokeWidth="1.6" /></svg>
          </Pinned>
          <Tab><TabLetter>A</TabLetter>Adobe ID</Tab>
          <Tab><D2L>D2L</D2L>MyLab Math Assignments...</Tab>
          <Tab $active><TabLetter>P</TabLetter>Do Homework - *Section 2.2</Tab>
          <Tab><FaTwitch size={30} color="#9146ff" />(49) Twitch</Tab>
          <Tab>
            <svg width="34" height="36" viewBox="0 0 34 36"><rect x="1" y="1" width="32" height="34" rx="6" fill="#061226" stroke="#ddd" strokeWidth="2" /><path d="M17 7l-7 21h4l3-10 3 10h4z" fill="#f0508a" /></svg>
            Untitled - September 09, 2...
          </Tab>
          <Tab><TabLetter>T</TabLetter>Student Account Home</Tab>
        </Tabs>
        <Page>
          <TopHead>
            <Course>Fall 2024 College Algebra (MATH-1314-08E)</Course>
            <Person>De_Corian Franklin</Person>
            <Stamp>09/09/24 1:05 PM</Stamp>
            <HelpRing>?</HelpRing>
          </TopHead>
          <Band>
            <Burger><span /><span /><span /></Burger>
            <HwTitle>Homework:  <b>*Section 2.2</b></HwTitle>
            <RoundNav><ChevronLeft size={24} color="#fff" strokeWidth={3} /></RoundNav>
            <QBlock>
              <QTitle>Question 2, 2.2.9</QTitle>
              <QPart>Part 1 of 3</QPart>
            </QBlock>
            <RoundNav><ChevronRight size={24} color="#fff" strokeWidth={3} /></RoundNav>
            <Score>
              <div><b>HW Score:</b> 0%, 0 of 17 points</div>
              <ScoreRow><ScoreRing /><span><b>Points:</b> 0 of 1</span></ScoreRow>
            </Score>
            <GearSlot><Settings size={42} color="#fff" strokeWidth={2} /></GearSlot>
            <SaveBtn>Save</SaveBtn>
          </Band>
          <Main>
            <Side>
              <SideHead>
                <SideTitle>Question list</SideTitle>
                <svg width="46" height="42" viewBox="0 0 46 42"><path d="M2 1v40M44 21H10M24 5L8 21l16 16" fill="none" stroke="#6b7176" strokeWidth="3.4" /></svg>
              </SideHead>
              {questions.map(n => (
                <Row key={n} $active={n === 2}>
                  {n === 1 ? (
                    <RowBad><svg width="18" height="18" viewBox="0 0 18 18"><path d="M3 3l12 12M15 3L3 15" stroke="#fff" strokeWidth="4" /></svg></RowBad>
                  ) : <RowRing />}
                  Question {n}
                </Row>
              ))}
            </Side>
            <Content>
              <QArea>
                <Prompt>
                  Use the graph to determine
                  <FirstPart><b>(a)</b><span>open intervals on which the<br />function is increasing, if any.</span></FirstPart>
                  <PromptPart><b>(b)</b><span>open intervals on which the<br />function is decreasing, if any.</span></PromptPart>
                  <PromptPart><b>(c)</b><span>open intervals on which the<br />function is constant, if any.</span></PromptPart>
                </Prompt>
                <Graph />
                <Tools>
                  <ToolBtn><Zoomer plus c="#111" /></ToolBtn>
                  <ToolBtn><Zoomer plus={false} c="#8d8d8d" /></ToolBtn>
                  <ToolBtn>
                    <svg width="24" height="24" viewBox="0 0 24 24"><path d="M14 5H1v18h18V10" fill="none" stroke="#222" strokeWidth="1.4" /><path d="M8 16L21 3M14 2h8v8" fill="none" stroke="#111" strokeWidth="2" /></svg>
                  </ToolBtn>
                </Tools>
              </QArea>
              <Divider><Handle><span /><span /><span /></Handle></Divider>
              <Answer>
                <Lead><b>(a)</b> Select the correct choice below and, if necessary, fill in the answer box to complete your choice.</Lead>
                <ChoiceA>
                  <Radio /><Letter>A.</Letter>
                  <ChoiceText>
                    <FirstLine>The function is increasing on the interval(s)<Blank />.</FirstLine>
                    <Hint>(Type your answer in interval notation. Use a comma to separate answers as needed.)</Hint>
                  </ChoiceText>
                </ChoiceA>
                <ChoiceB>
                  <Radio /><Letter>B.</Letter>
                  <ChoiceText>The function is never increasing.</ChoiceText>
                </ChoiceB>
              </Answer>
            </Content>
          </Main>
          <Foot>
            <FootLink>Help me solve this</FootLink>
            <FootLink>View an example</FootLink>
            <span>Get more help<Caret /></span>
            <Clear>Clear all</Clear>
            <Check>Check answer</Check>
          </Foot>
        </Page>
      </Win>

      <Dock>
        {first.map((d, i) => {
          const Slot = i === 0 ? FirstSlot : DockSlot;
          return (
            <Slot key={d.k}>
              <Glyph>{d.c}</Glyph>
              {d.badge && <Badge>{d.badge}</Badge>}
              <Dot $on={d.dot} />
            </Slot>
          );
        })}
        <DockSlot $w={86} $ml={16}><Glyph $top={-7}><Roblox /></Glyph></DockSlot>
        <DockRule />
        <DockSlot $ml={32}><Glyph><Preview /></Glyph></DockSlot>
        <DockSlot><Glyph><CreativeCloud /></Glyph><Dot $on /></DockSlot>
        <DockSlot><Glyph><PhotoBooth /></Glyph></DockSlot>
        <DockSlot><Glyph><Messages id="m2" /></Glyph><PhoneBadge /></DockSlot>
        <DockRule />
        <DockSlot $w={48} $ml={40}><Glyph $top={-8}><DocThumb /></Glyph></DockSlot>
        <DockSlot $w={60} $ml={42}><Glyph $top={-9}><Trash /></Glyph></DockSlot>
      </Dock>
    </Desktop>
  );
}
